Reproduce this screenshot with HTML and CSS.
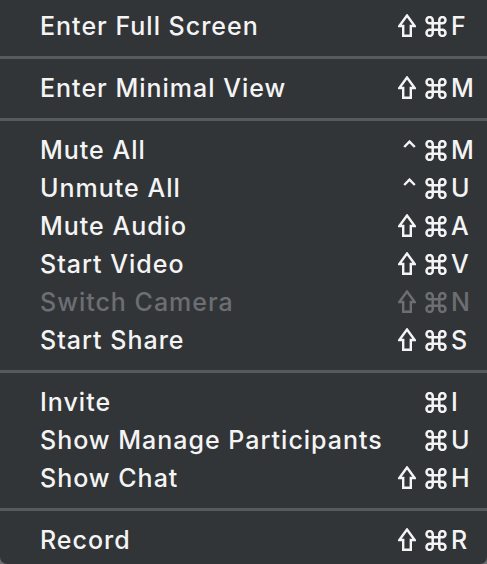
FILE: index.html
```html
<!DOCTYPE html>
<html>
<head>
<meta charset="utf-8">
<link rel="stylesheet" href="styles.css">
</head>
<body>
<svg width="0" height="0" class="defs">
  <defs>
    <symbol id="shift" viewBox="0 0 18 23">
      <path d="M9 1.5 L16.7 12 H12.8 V21.7 H5.2 V12 H1.3 Z" fill="none" stroke="currentColor" stroke-width="2.4" stroke-linejoin="miter"/>
    </symbol>
    <symbol id="cmd" viewBox="0 0 23 21">
      <path d="M8.2 7.2 V13.8 M14.8 7.2 V13.8 M8.2 7.2 H14.8 M8.2 13.8 H14.8 M8.2 7.2 H5.1 A3.1 3.1 0 1 1 8.2 4.1 Z M14.8 7.2 V4.1 A3.1 3.1 0 1 1 17.9 7.2 Z M14.8 13.8 H17.9 A3.1 3.1 0 1 1 14.8 16.9 Z M8.2 13.8 V16.9 A3.1 3.1 0 1 1 5.1 13.8 Z" fill="none" stroke="currentColor" stroke-width="2.5"/>
    </symbol>
    <symbol id="ctrl" viewBox="0 0 13 8">
      <path d="M1.2 7 L6.5 1.6 L11.8 7" fill="none" stroke="currentColor" stroke-width="2.4"/>
    </symbol>
  </defs>
</svg>
<div class="menu">
  <div class="row"><span class="label">Enter Full Screen</span><span class="mods"><svg class="i-shift"><use href="#shift"/></svg><svg class="i-cmd"><use href="#cmd"/></svg></span><span class="key">F</span></div>
  <div class="sep"></div>
  <div class="row"><span class="label">Enter Minimal View</span><span class="mods"><svg class="i-shift"><use href="#shift"/></svg><svg class="i-cmd"><use href="#cmd"/></svg></span><span class="key">M</span></div>
  <div class="sep"></div>
  <div class="row"><span class="label">Mute All</span><span class="mods"><svg class="i-ctrl"><use href="#ctrl"/></svg><svg class="i-cmd"><use href="#cmd"/></svg></span><span class="key">M</span></div>
  <div class="row"><span class="label">Unmute All</span><span class="mods"><svg class="i-ctrl"><use href="#ctrl"/></svg><svg class="i-cmd"><use href="#cmd"/></svg></span><span class="key">U</span></div>
  <div class="row"><span class="label">Mute Audio</span><span class="mods"><svg class="i-shift"><use href="#shift"/></svg><svg class="i-cmd"><use href="#cmd"/></svg></span><span class="key">A</span></div>
  <div class="row"><span class="label">Start Video</span><span class="mods"><svg class="i-shift"><use href="#shift"/></svg><svg class="i-cmd"><use href="#cmd"/></svg></span><span class="key">V</span></div>
  <div class="row disabled"><span class="label">Switch Camera</span><span class="mods"><svg class="i-shift"><use href="#shift"/></svg><svg class="i-cmd"><use href="#cmd"/></svg></span><span class="key">N</span></div>
  <div class="row"><span class="label">Start Share</span><span class="mods"><svg class="i-shift"><use href="#shift"/></svg><svg class="i-cmd"><use href="#cmd"/></svg></span><span class="key">S</span></div>
  <div class="sep"></div>
  <div class="row"><span class="label">Invite</span><span class="mods"><svg class="i-cmd"><use href="#cmd"/></svg></span><span class="key">I</span></div>
  <div class="row"><span class="label">Show Manage Participants</span><span class="mods"><svg class="i-cmd"><use href="#cmd"/></svg></span><span class="key">U</span></div>
  <div class="row"><span class="label">Show Chat</span><span class="mods"><svg class="i-shift"><use href="#shift"/></svg><svg class="i-cmd"><use href="#cmd"/></svg></span><span class="key">H</span></div>
  <div class="sep"></div>
  <div class="row"><span class="label">Record</span><span class="mods"><svg class="i-shift"><use href="#shift"/></svg><svg class="i-cmd"><use href="#cmd"/></svg></span><span class="key">R</span></div>
</div>
</body>
</html>
```

FILE: styles.css
```css
html, body {
  margin: 0;
  padding: 0;
  background: #6b6d70;
}
.defs {
  position: absolute;
  width: 0;
  height: 0;
}
.menu {
  width: 487px;
  height: 564px;
  box-sizing: border-box;
  background: #323538;
  border-radius: 0 0 7px 7px;
  padding-top: 7px;
  font-family: "Inter", "Noto Sans", sans-serif;
  font-size: 25px;
  font-weight: 500;
  letter-spacing: 1px;
  color: #f4f4f4;
  overflow: hidden;
}
.row {
  display: flex;
  align-items: center;
  height: 38px;
  padding-left: 40px;
}
.label {
  flex: 1;
  white-space: nowrap;
}
.mods {
  display: flex;
  align-items: center;
  justify-content: flex-end;
  gap: 8px;
  margin-right: 3px;
}
.key {
  width: 36px;
  text-align: left;
  letter-spacing: 0;
}
.i-shift {
  width: 18px;
  height: 23px;
  margin-top: -2px;
}
.i-cmd {
  width: 24px;
  height: 21px;
}
.i-ctrl {
  width: 13px;
  height: 8px;
  margin-top: -13px;
}
.disabled {
  color: #6c6e71;
}
.sep {
  height: 3px;
  background: #575a5d;
  margin: 11px 0 10px;
}
```
